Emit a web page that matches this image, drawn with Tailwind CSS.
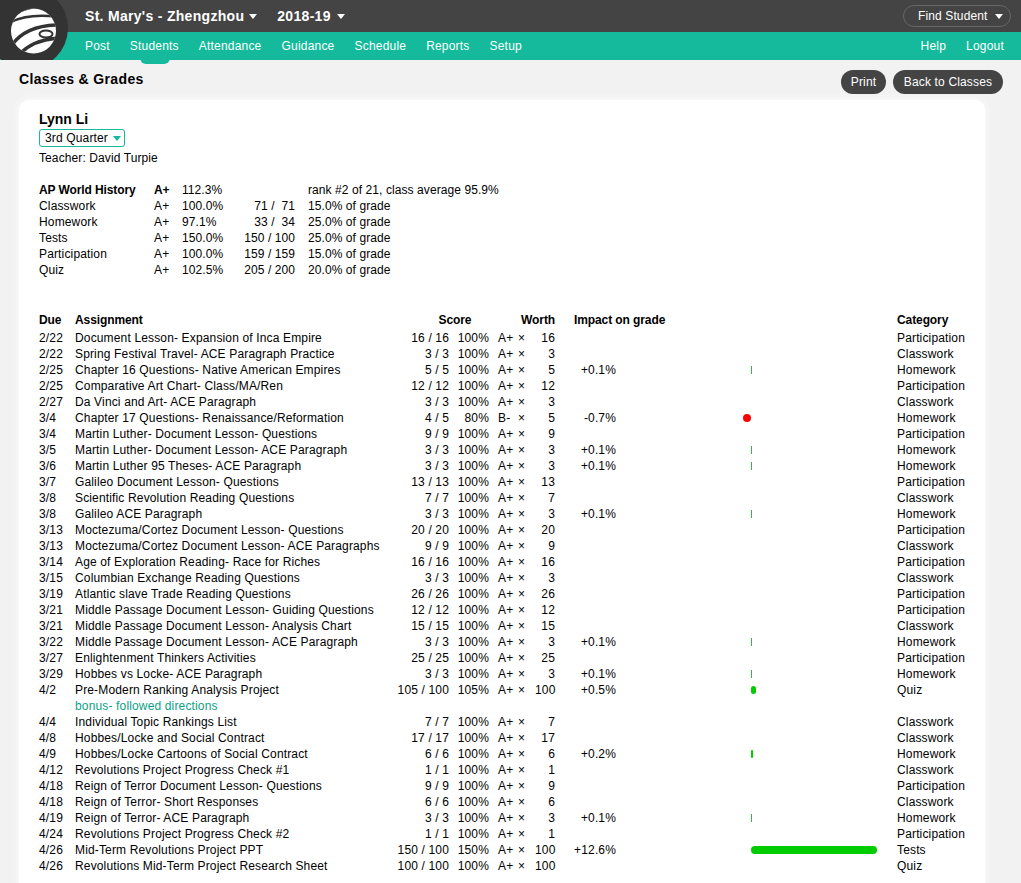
<!DOCTYPE html>
<html lang="en">
  <head>
    <meta charset="UTF-8" />
    <title>Classes &amp; Grades</title>
    <script src="https://cdn.jsdelivr.net/npm/@tailwindcss/browser@4"></script>
  </head>
  <body class="bg-[#f2f2f2] h-[883px] overflow-hidden font-['Liberation_Sans',Arial,sans-serif] text-[12px] leading-[16px] tracking-[0.15px] text-black">
    <!-- logo -->
    <div class="absolute left-0 top-0 w-[69px] h-[60px] overflow-hidden z-10">
      <svg width="69" height="60" viewBox="0 0 69 60">
        <defs><clipPath id="globe"><circle cx="33.5" cy="31" r="22.5" /></clipPath></defs>
        <circle cx="27" cy="28" r="41" fill="#333" />
        <g clip-path="url(#globe)">
          <rect x="10" y="8" width="48" height="46" fill="#fff" />
          <path fill="none" stroke="#333" stroke-width="2.5" d="M8 24C20 16 36 14 60 17" />
          <path fill="none" stroke="#333" stroke-width="3.5" d="M12 45C22 31 38 25 60 25" />
          <path fill="none" stroke="#333" stroke-width="3.5" d="M18 56C28 44 42 39 60 38" />
          <path fill="#333" d="M8 8H42C30 8 18 12 10 19Z" />
        </g>
        <ellipse cx="46" cy="34" rx="7.5" ry="4.5" fill="#333" />
        <ellipse cx="46" cy="34" rx="5.5" ry="2.5" fill="#fff" />
      </svg>
    </div>

    <header>
      <div class="h-8 bg-[#444] flex items-center pl-[85px] pr-[10px] text-white">
        <div class="flex items-center gap-[5px] text-[14px] font-bold tracking-[0.3px]">St. Mary's - Zhengzhou <span class="w-0 h-0 border-x-[4px] border-x-transparent border-t-[5px] border-t-white"></span></div>
        <div class="flex items-center gap-[6px] ml-[20px] text-[14px] font-bold tracking-[0.3px]">2018-19 <span class="w-0 h-0 border-x-[4px] border-x-transparent border-t-[5px] border-t-white"></span></div>
        <button class="ml-auto w-[108px] h-[22px] rounded-full border border-[#666] flex items-center pl-[14px] gap-[7px] tracking-[0.12px]">Find Student <span class="w-0 h-0 border-x-[4px] border-x-transparent border-t-[5px] border-t-white"></span></button>
      </div>
      <nav class="h-7 bg-[#15b99b] flex items-center pl-[85px] pr-[17px] gap-[20px] text-white tracking-[0.2px]">
        <a>Post</a>
        <a class="relative">Students<span class="absolute left-[10px] top-[20px] w-[30px] h-[6px] bg-[#15b99b] rounded-b-[15px]"></span></a>
        <a>Attendance</a>
        <a>Guidance</a>
        <a>Schedule</a>
        <a>Reports</a>
        <a>Setup</a>
        <a class="ml-auto">Help</a>
        <a>Logout</a>
      </nav>
    </header>

    <main class="px-[19px]">
      <div class="h-10 flex items-center">
        <h1 class="text-[14px] font-bold tracking-[0.35px] -mt-[2px]">Classes &amp; Grades</h1>
        <button class="ml-auto mt-1 w-[45px] h-6 rounded-full bg-[#444] text-white">Print</button>
        <button class="ml-[7px] mt-1 -mr-[1px] w-[110px] h-6 rounded-full bg-[#444] text-white">Back to Classes</button>
      </div>

      <div class="w-[966px] h-[800px] bg-white rounded-t-[10px] shadow-[0_0_8px_#fff] pl-5 pt-[11px]">
        <h2 class="text-[14px] font-bold leading-4 tracking-normal">Lynn Li</h2>
        <div class="mt-[2px] w-[86px] h-[18px] border border-[#15b99b] rounded-[3px] flex items-center pl-[5px] gap-[5px]">3rd Quarter <span class="w-0 h-0 border-x-[4px] border-x-transparent border-t-[5px] border-t-[#15b99b]"></span></div>
        <p class="mt-[3px] tracking-[0.1px]">Teacher: David Turpie</p>

        <table class="mt-4 border-collapse">
          <colgroup><col class="w-[115px]" /><col class="w-[28px]" /><col class="w-[42px]" /><col class="w-[71px]" /><col class="w-[13px]" /><col /></colgroup>
          <tbody id="summary"></tbody>
        </table>

        <table class="mt-[34px] table-fixed w-[946px] border-collapse">
          <colgroup>
            <col class="w-[36px]" /><col class="w-[310px]" /><col class="w-[4px]" /><col class="w-[60px]" /><col class="w-[40px]" />
            <col class="w-[9px]" /><col class="w-[20px]" /><col class="w-[17px]" /><col class="w-[20px]" /><col class="w-[61px]" /><col class="w-[135px]" /><col class="w-[146px]" /><col />
          </colgroup>
          <thead>
            <tr class="font-bold h-4 tracking-[-0.1px]">
              <td>Due</td><td>Assignment</td><td></td><td colspan="2" class="text-center pl-[32px]">Score</td><td></td><td colspan="3" class="text-right">Worth</td>
              <td colspan="2" class="pl-[19px]">Impact on grade</td><td></td><td>Category</td>
            </tr>
            <tr class="h-[2px]"><td colspan="13"></td></tr>
          </thead>
          <tbody id="rows"></tbody>
        </table>
      </div>
    </main>

    <script>
      const summary = [
        ["AP World History", "A+", "112.3%", "", "rank #2 of 21, class average 95.9%"],
        ["Classwork", "A+", "100.0%", "71 /  71", "15.0% of grade"],
        ["Homework", "A+", "97.1%", "33 /  34", "25.0% of grade"],
        ["Tests", "A+", "150.0%", "150 / 100", "25.0% of grade"],
        ["Participation", "A+", "100.0%", "159 / 159", "15.0% of grade"],
        ["Quiz", "A+", "102.5%", "205 / 200", "20.0% of grade"],
      ];

      // due, assignment, score, pct, grade, worth, impact, category
      const rows = [
        ["2/22", "Document Lesson- Expansion of Inca Empire", "16 / 16", "100%", "A+", 16, "", "Participation"],
        ["2/22", "Spring Festival Travel- ACE Paragraph Practice", "3 / 3", "100%", "A+", 3, "", "Classwork"],
        ["2/25", "Chapter 16 Questions- Native American Empires", "5 / 5", "100%", "A+", 5, 0.1, "Homework"],
        ["2/25", "Comparative Art Chart- Class/MA/Ren", "12 / 12", "100%", "A+", 12, "", "Participation"],
        ["2/27", "Da Vinci and Art- ACE Paragraph", "3 / 3", "100%", "A+", 3, "", "Classwork"],
        ["3/4", "Chapter 17 Questions- Renaissance/Reformation", "4 / 5", "80%", "B-", 5, -0.7, "Homework"],
        ["3/4", "Martin Luther- Document Lesson- Questions", "9 / 9", "100%", "A+", 9, "", "Participation"],
        ["3/5", "Martin Luther- Document Lesson- ACE Paragraph", "3 / 3", "100%", "A+", 3, 0.1, "Homework"],
        ["3/6", "Martin Luther 95 Theses- ACE Paragraph", "3 / 3", "100%", "A+", 3, 0.1, "Homework"],
        ["3/7", "Galileo Document Lesson- Questions", "13 / 13", "100%", "A+", 13, "", "Participation"],
        ["3/8", "Scientific Revolution Reading Questions", "7 / 7", "100%", "A+", 7, "", "Classwork"],
        ["3/8", "Galileo ACE Paragraph", "3 / 3", "100%", "A+", 3, 0.1, "Homework"],
        ["3/13", "Moctezuma/Cortez Document Lesson- Questions", "20 / 20", "100%", "A+", 20, "", "Participation"],
        ["3/13", "Moctezuma/Cortez Document Lesson- ACE Paragraphs", "9 / 9", "100%", "A+", 9, "", "Classwork"],
        ["3/14", "Age of Exploration Reading- Race for Riches", "16 / 16", "100%", "A+", 16, "", "Participation"],
        ["3/15", "Columbian Exchange Reading Questions", "3 / 3", "100%", "A+", 3, "", "Classwork"],
        ["3/19", "Atlantic slave Trade Reading Questions", "26 / 26", "100%", "A+", 26, "", "Participation"],
        ["3/21", "Middle Passage Document Lesson- Guiding Questions", "12 / 12", "100%", "A+", 12, "", "Participation"],
        ["3/21", "Middle Passage Document Lesson- Analysis Chart", "15 / 15", "100%", "A+", 15, "", "Classwork"],
        ["3/22", "Middle Passage Document Lesson- ACE Paragraph", "3 / 3", "100%", "A+", 3, 0.1, "Homework"],
        ["3/27", "Enlightenment Thinkers Activities", "25 / 25", "100%", "A+", 25, "", "Participation"],
        ["3/29", "Hobbes vs Locke- ACE Paragraph", "3 / 3", "100%", "A+", 3, 0.1, "Homework"],
        ["4/2", "Pre-Modern Ranking Analysis Project", "105 / 100", "105%", "A+", 100, 0.5, "Quiz"],
        ["", "bonus- followed directions"],
        ["4/4", "Individual Topic Rankings List", "7 / 7", "100%", "A+", 7, "", "Classwork"],
        ["4/8", "Hobbes/Locke and Social Contract", "17 / 17", "100%", "A+", 17, "", "Classwork"],
        ["4/9", "Hobbes/Locke Cartoons of Social Contract", "6 / 6", "100%", "A+", 6, 0.2, "Homework"],
        ["4/12", "Revolutions Project Progress Check #1", "1 / 1", "100%", "A+", 1, "", "Classwork"],
        ["4/18", "Reign of Terror Document Lesson- Questions", "9 / 9", "100%", "A+", 9, "", "Participation"],
        ["4/18", "Reign of Terror- Short Responses", "6 / 6", "100%", "A+", 6, "", "Classwork"],
        ["4/19", "Reign of Terror- ACE Paragraph", "3 / 3", "100%", "A+", 3, 0.1, "Homework"],
        ["4/24", "Revolutions Project Progress Check #2", "1 / 1", "100%", "A+", 1, "", "Participation"],
        ["4/26", "Mid-Term Revolutions Project PPT", "150 / 100", "150%", "A+", 100, 12.6, "Tests"],
        ["4/26", "Revolutions Mid-Term Project Research Sheet", "100 / 100", "100%", "A+", 100, "", "Quiz"],
      ];

      document.getElementById("summary").innerHTML = summary.map((s, i) => `
        <tr class="h-4 ${i === 0 ? "font-bold tracking-[-0.1px]" : ""}">
          <td>${s[0]}</td>
          <td>${s[1]}</td>
          <td class="font-normal tracking-[0.08px]">${s[2]}</td>
          <td class="font-normal tracking-[0.08px] text-right whitespace-pre">${s[3]}</td>
          <td></td>
          <td class="font-normal tracking-[0.08px] whitespace-nowrap">${s[4]}</td>
        </tr>`).join("");

      function impactBar(v) {
        if (v === "") return "";
        if (v < 0) return '<div class="ml-[16px] w-2 h-2 rounded-full bg-[#f00]"></div>';
        const w = Math.round(v * 10);
        return `<div class="ml-[24px] h-2 ${w > 1 ? "rounded-full bg-[#00cc00]" : "bg-[#33bb33]"}" style="width:${w}px"></div>`;
      }

      document.getElementById("rows").innerHTML = rows.map((r) => {
        if (r.length === 2) {
          return `<tr class="h-4"><td></td><td colspan="12" class="text-[#0d9f85]">${r[1]}</td></tr>`;
        }
        const impact = r[6] === "" ? "" : (r[6] > 0 ? "+" : "") + r[6].toFixed(1) + "%";
        return `<tr class="h-4">
          <td>${r[0]}</td>
          <td class="whitespace-nowrap">${r[1]}</td>
          <td></td>
          <td class="text-right whitespace-nowrap">${r[2]}</td>
          <td class="text-right">${r[3]}</td>
          <td></td>
          <td>${r[4]}</td>
          <td>×</td>
          <td class="text-right">${r[5]}</td>
          <td class="text-right">${impact}</td>
          <td class="pl-[111px] overflow-visible"><div class="w-0">${impactBar(r[6])}</div></td>
          <td></td>
          <td>${r[7]}</td>
        </tr>`;
      }).join("");
    </script>
  </body>
</html>
